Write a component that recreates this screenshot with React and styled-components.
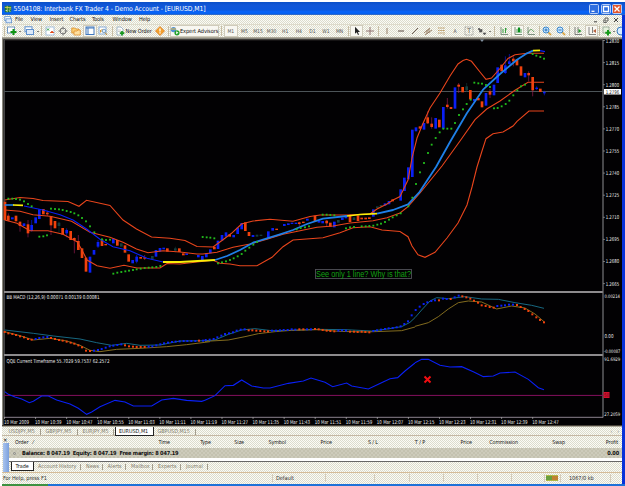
import React from "react";
import styled, { createGlobalStyle, css } from "styled-components";

const Global = createGlobalStyle`
  * { box-sizing: border-box; }
  html, body { margin: 0; background: #fff; overflow: hidden; }
  body, text { font-family: "DejaVu Sans Condensed", "DejaVu Sans", sans-serif; font-stretch: condensed; }
`;

const weave = css`
  background: repeating-conic-gradient(#fbfbf6 0 25%, #dcdccc 0 50%) 0 0 / 2px 2px;
`;

const Screen = styled.div`
  width: 625px; height: 486px; padding: 2px 0 0 2px; overflow: hidden;
  display: flex; flex-direction: column; background: #fff;
`;
const Window = styled.div`
  height: 482px; display: flex; flex-direction: column;
  border-right: 3px solid #0831d9; width: 623px; ${weave}
`;
const TitleBar = styled.div`
  height: 13px; width: 623px; flex: none; display: flex; align-items: center; padding: 0 3px 0 2px;
  background: linear-gradient(#0a50c8, #1257d8 25%, #0d58dc 60%, #0864fa 75%, #0560ee 92%, #5672a8);
`;
const Title = styled.div`
  flex: 1; margin-left: 1.5px; color: #fff; font-size: 6.8px; line-height: 12px; white-space: nowrap;
  letter-spacing: -0.06px;
`;
const WinButton = styled.div`
  width: 10px; height: 10px; margin-left: 1.4px; border: 1px solid #b9d0f8; border-radius: 1.5px;
  background: ${(p) => (p.$close ? "#e2552c" : "#2f6fe0")}; display: flex;
  svg { width: 8px; height: 8px; }
`;
const MenuBar = styled.div`
  height: 10px; flex: none; display: flex; align-items: center; padding-left: 2px;
  border-bottom: 1px solid #dedbcb;
`;
const MenuIcon = styled.svg`width: 8px; height: 8px; flex: none; margin-right: 3px;`;
const MenuItem = styled.div`
  width: ${(p) => p.$w}px; font-size: 5.6px; line-height: 9px; color: #222; letter-spacing: -0.08px; white-space: nowrap;
`;
const Spacer = styled.div`flex: 1;`;
const ChildButtons = styled.div`
  display: flex; gap: 4px; padding-right: 3px;
  svg { width: 6px; height: 6px; }
`;
const Toolbar = styled.div`
  height: 13px; flex: none; display: flex; align-items: center; padding-left: 1px; overflow: hidden;
  border-bottom: 1px solid #aca899;
`;
const Slot = styled.div`
  width: ${(p) => p.$w || 13.5}px; height: 12px; flex: none; display: flex; align-items: center; justify-content: center;
  font-size: 5px; color: #555; white-space: nowrap;
  ${(p) => p.$on && "background: #f8f7f1; border: 1px solid #cfcbbb;"}
  svg { width: 10px; height: 10px; flex: none; }
`;
const Caption = styled.span`
  width: ${(p) => p.$w}px; flex: none; font-size: 5.6px; line-height: 10px; color: #111; white-space: nowrap; letter-spacing: -0.08px;
`;
const Grip = styled.div`
  width: ${(p) => p.$w || 3}px; height: 10px; flex: none; display: flex; justify-content: center;
  &::before { content: ""; width: 1px; background: #c7bda4; }
`;
const Caret = styled.div`
  width: ${(p) => p.$w}px; flex: none; display: flex; justify-content: center;
  &::before { content: ""; border: 1.5px solid transparent; border-top-color: #111; border-bottom: 0; }
`;
const ChartFrame = styled.div`
  height: 388px; width: 620px; flex: none; background: #020103;
  svg { display: block; }
`;
const ChartTabs = styled.div`
  height: 10px; flex: none; display: flex; padding-left: 3px; border-top: 1px solid #aca899; border-bottom: 1px solid #c5b8a4;
`;
const Tab = styled.div`
  width: ${(p) => p.$w}px; flex: none; padding-left: ${(p) => p.$pad || 3.5}px; font-size: 5.4px; line-height: 9px;
  white-space: nowrap; color: #857f70;
  background: linear-gradient(#a29c8c, #a29c8c) right 1px top 2px / 1px 6px no-repeat;
  ${(p) => p.$active && "background: #fff; color: #111; border: solid #222; border-width: 0 1px 1px; height: 9px; line-height: 8px;"}
`;
const Arrows = styled.div`
  display: flex; gap: 5px; padding-right: 3px; font-size: 5px; line-height: 8px; color: #777;
`;
const Terminal = styled.div`height: 37px; flex: none; display: flex; border-bottom: 1px solid #d5bc98;`;
const Side = styled.div`
  width: 7px; padding-left: 1px; display: flex; flex-direction: column; font-size: 6px; line-height: 7px;
  &::after { content: ""; flex: 1; background: linear-gradient(90deg, #a9c4ee, #7b9fdc); }
`;
const Panel = styled.div`flex: 1; display: flex; flex-direction: column;`;
const HeadRow = styled.div`height: 12px; flex: none; display: flex; align-items: center; padding-left: 6px;`;
const Head = styled.div`
  width: ${(p) => p.$w}px; flex: none; font-size: 5.4px; line-height: 10px; color: #222; white-space: nowrap;
  text-align: ${(p) => (p.$left ? "left" : "right")}; letter-spacing: -0.08px;
`;
const Balance = styled.div`
  height: 10px; flex: none; display: flex; justify-content: space-between; align-items: center; padding: 0 3px 0 4px;
  background: repeating-conic-gradient(#cdcbbb 0 25%, #c4c2b0 0 50%) 0 0 / 4px 4px;
  font-size: 5.6px; font-weight: bold; color: #111; white-space: nowrap; letter-spacing: -0.18px;
`;
const Dot = styled.span`
  display: inline-block; width: 3px; height: 3px; margin-right: 6px; border: 1px solid #888; border-radius: 50%; vertical-align: 0;
`;
const Blank = styled.div`height: 4px; flex: none; background: #fff; border-bottom: 1px solid #666;`;
const TermTabs = styled.div`height: 11px; flex: none; display: flex; padding-left: 2px;`;
const Status = styled.div`
  height: 9px; flex: none; display: flex; align-items: center; padding-left: 1px; font-size: 5.6px; color: #333; white-space: nowrap;
`;
const Cell = styled.div`
  width: ${(p) => p.$w}px; height: 8px; line-height: 9px; flex: none; border-right: 1px solid #d4cbb9;
  padding-left: ${(p) => p.$pad || 0}px; letter-spacing: -0.08px;
  svg { width: 13px; height: 7px; display: block; }
`;
const Taskbar = styled.div`
  height: 2px; flex: none; width: 623px; background: linear-gradient(90deg, #3d9140 46px, #1d72d8 46px);
`;

const WHITE = { fill: "none", stroke: "#fff", strokeWidth: 1.3 };

const ICONS = {
  app: <><rect x="1" y="1" width="8" height="8" fill="#187838" /><path d="M1 3h8M4 1v8M6 5h3" stroke="#e8d860" /><path d="M2 7h2M6 7l2 1" stroke="#fff" /></>,
  newChart: <><rect x=".5" y="1" width="7" height="6" fill="#fff" stroke="#7298c4" /><path d="M6.5 3v6M3.5 6h6" stroke="#119412" strokeWidth="2" /></>,
  windows: <><rect x="1" y=".8" width="7" height="5" fill="#fff" stroke="#5f90cd" /><rect x="2.5" y="3.5" width="7" height="5" fill="#dceafa" stroke="#5f90cd" /></>,
  market: <><rect x="1" y="1" width="8" height="8" fill="#fff" stroke="#87add8" strokeWidth=".7" /><path d="M2 2.5l2 2m0-2l-2 2" stroke="#21993a" /><path d="M5 7l2-2 2 2" fill="#e24b1b" stroke="#e24b1b" strokeWidth=".7" /></>,
  target: <><circle cx="5" cy="5" r="3" fill="none" stroke="#777" /><path d="M5 .5v3M5 6.5v3M.5 5h3M6.5 5h3" stroke="#777" /></>,
  folder: <><path d="M.8 2h3l1 1h3v4h-7z" fill="#fbcf75" stroke="#d98c25" strokeWidth=".8" /><path d="M3 5h3l1-1h2.3v5H3z" fill="#ffe0a0" stroke="#e09030" strokeWidth=".8" /></>,
  nav: <><rect x="1" y="1" width="8" height="7.5" fill="#fff" stroke="#3f77bd" /><path d="M1 2h8M3 2v6" stroke="#3f77bd" /></>,
  tester: <><rect x="1" y="1" width="7" height="7" fill="#fff" stroke="#6f9bd0" strokeWidth=".8" /><path d="M2.5 6.5V4M4 6V3" stroke="#d59b35" /><circle cx="6" cy="5" r="1.8" fill="#d8edff" stroke="#4e80b5" strokeWidth=".7" /><path d="M7 6.5L9 9" stroke="#c48b25" /></>,
  order: <><path d="M2 1h4l2 2v6H2z" fill="#fff" stroke="#8aa6ba" strokeWidth=".8" /><path d="M3 4h3M3 5.5h3" stroke="#999" strokeWidth=".5" /><path d="M7 5v4.5M4.8 7.2h4.5" stroke="#17961b" strokeWidth="1.7" /></>,
  diamond: <><path d="M5 .5L9.5 5 5 9.5.5 5z" fill="#f4a02c" stroke="#d7791b" strokeWidth=".7" /><path d="M5 2.4v3M5 6.3v1.2" stroke="#fff" strokeWidth="1.3" /></>,
  expert: <><circle cx="3.5" cy="3.6" r="2.7" fill="#4f91d4" /><path d="M1 3h5" stroke="#eebd45" /><circle cx="7" cy="6.8" r="2.6" fill="#22a12b" /><path d="M6.2 5.3l2.2 1.5-2.2 1.5z" fill="#fff" /></>,
  cursor: <path d="M3 .8v7l1.7-1.5L6 9l1-.5-1.2-2.6H8z" fill="#222" />,
  cross: <path d="M5 1v8M1 5h8" stroke="#866" strokeWidth=".9" />,
  vline: <path d="M5 2v6" stroke="#967f69" />,
  hline: <path d="M2 5h6" stroke="#5b4a42" />,
  slash: <path d="M2 8l6-6" stroke="#5b4a42" strokeWidth=".9" />,
  channel: <path d="M1 7l6-5M2 9l7-5M4 4v4M6 3v4" stroke="#87684b" strokeWidth=".8" />,
  fib: <path d="M1 2h7M1 4.5h7M1 7h5M7 6v3" stroke="#b49055" strokeWidth=".9" strokeDasharray="1.2 .4" />,
  label: <rect x="1" y="1" width="8" height="8" fill="none" stroke="#777" strokeWidth=".7" strokeDasharray="1 .7" />,
  arrows: <path d="M2 2l2 2 1-1v3H2l1-1-2-2zM6 7h3L7.5 9z" fill="#555" stroke="#555" strokeWidth=".6" />,
  bars: <><path d="M2 1v7.5h7" fill="none" stroke="#657b68" strokeWidth=".8" /><path d="M4 3v4M6.5 2v5M6.5 3H8" stroke="#20982c" strokeWidth=".9" /></>,
  candles: <><path d="M2 1v7.5h7" fill="none" stroke="#58745c" strokeWidth=".8" /><path d="M4 3v4M8 3v4" stroke="#258e33" strokeWidth=".8" /><path d="M6 1.5v5" stroke="#078d1b" strokeWidth="2.2" /></>,
  line: <><path d="M2 1v7.5h7" fill="none" stroke="#657b68" strokeWidth=".8" /><path d="M2 7c2-5 4-4 6-1" fill="none" stroke="#438c40" strokeWidth=".8" /></>,
  zoomIn: <><path d="M6 6l3 3" stroke="#d59c30" strokeWidth="1.6" /><circle cx="4" cy="4" r="3" fill="#c6e5ff" stroke="#3d88cc" /><path d="M4 2.4v3.2M2.4 4h3.2" stroke="#1769b6" strokeWidth=".9" /></>,
  zoomOut: <><path d="M6 6l3 3" stroke="#d59c30" strokeWidth="1.6" /><circle cx="4" cy="4" r="3" fill="#c6e5ff" stroke="#3d88cc" /><path d="M2.4 4h3.2" stroke="#1769b6" strokeWidth=".9" /></>,
  scroll: <><path d="M2 1v7.5h7M5 1v6" fill="none" stroke="#666" strokeWidth=".8" /><path d="M5.5 3l3 2-3 2z" fill="#20992a" /></>,
  shift: <><path d="M2 1v7.5h7M5.5 1v6" fill="none" stroke="#666" strokeWidth=".8" /><path d="M9 3L6 5l3 2z" fill="#b8613f" /></>,
  indicator: <><rect x="1" y="1" width="6" height="6" fill="#e7f1de" stroke="#839887" strokeWidth=".7" /><path d="M6 4v5.5M3.3 6.8h5.5" stroke="#159b19" strokeWidth="2" /></>,
  clock: <circle cx="5" cy="5" r="4" fill="#d9edff" stroke="#3c7fbd" />,
};
const Icon = ({ name }) => <svg viewBox="0 0 10 10" width="10" height="10">{ICONS[name]}</svg>;

/* Series are stored in thirds of a pixel, relative to the origin of their section. */
const at = (x, y) => `translate(${x} ${y}) scale(.333333)`;
const RED = "#f0410c", BLUE = "#0a20f5", TEAL = "#153e3c";

const BANDS = [
  "M4.7 200L20 197.5 33 198.5 43 200.5 68 201.5 79 206.3 86.5 200.3 100 203.3 110 205.5 123 220 136.5 229 151.5 237 170 238.3 185 240.5 197 246.5 213 247 222 240.5 231.5 233.3 241.5 224 253 221 270 219.3 293 221.3 310 216.5 320 215 347 215 370 214 377 209 387 204 393 200 400 196.5 408 180 412 158 417 138 422.5 124.5 430 108 440 93 450 76 458 64 463 60.5 466.5 59.3 471.5 61.3 480 72 486 79.3 491.5 78 500 68.5 508 58.5 515 54.7 527 53.3 544 53.3",
  "M4.7 210L20 211.3 33 214.7 50 216.3 71.5 221.3 90 232.3 110 237.3 123 242.3 136.5 249 148 252.7 163 250.7 180 252 197 254 203 254 217 252.3 233 247.3 250 244 267 239.3 283 234.3 300 230.7 317 227.3 333 226 350 223 373 220.7 387 217.7 400 213 408 206.7 420 193 442 166 460 141 475 119.7 486.7 109 500 101 515 90.3 528 82.3 544 82.3",
  "M4.7 220L17 223.3 30 230.7 48 230.7 63 234.3 77 241.7 82 250 87 260 97 265.7 110 268.3 124 265.3 137 268 160 268 167 263.5 180 264 197 262 213 260.3 220 263.3 230 264 240 265.7 257 265.7 272 257.3 283 246.7 293 240 323 237.7 340 232.7 353 227.7 370 226.7 382 230 400 231.5 408 236.7 412 246 418 254.7 425 257.3 435 252.3 447 238 458 223 467 205 472 187 477 167 482 151 486 138.7 493 133.7 503 132 513 126 517 121.3 529 111 544 111",
];
const AVERAGE = [
  ["#1f80e8", 1.6, "M4.7 205L14 205"],
  ["#f9ee08", 1.6, "M13 205L23 205.4"],
  [BLUE, 1.1, "M24 206L43 210 60 214.7 73 220 87 229.3 100 239.3 113 246.7 130 250.7 147 258.3 163 262"],
  ["#f9ee08", 1.8, "M163 262L180 262 215 260"],
  ["#1f80e8", 1.8, "M215 260L227 256 240 250 253 242.7 267 238.3 280 234.3 293 230 307 224 323 218.7 347 216M377 213.7L393 210 408 204.3 419 192.7 436 167 450 142 467 113 483 89.7 500 74 517 59.7 527 53.3 533 50.7"],
  ["#f9ee08", 1.7, "M347 216L360 214.5 377 213.7M533 50.6L540 50.3"],
  [BLUE, 1.3, "M540 50.6L545 51.7"],
];
const SAR = [
  [0, 180, "25,56 37,56 48,57 60,59 72,64 84,72 95,79 118,170 130,169 141,166 153,86 165,87 177,88 188,90 200,93 212,96 223,100 235,106 246,114 258,124 270,139 283,157 306,178 318,180 330,179 340,281 352,278 364,276 376,274 387,272 399,270 410,268 422,266 434,264 446,263 457,262 469,261 481,258"],
  [200, 180, "8,171 20,172 31,173 43,175 54,250 66,247 78,244 90,240 101,235 113,229 125,222 136,212 148,203 160,194 171,186 290,148 302,144 315,142 327,139 368,104 380,104 391,105 403,106 438,145 450,142 462,141 485,139 497,139 508,138 520,137 532,134 543,131 555,126 567,119 578,112 590,106 602,100 625,79"],
  [400, 160, "37,113 48,72 60,37"],
  [400, 38, "72,375 84,345 95,320 107,300 119,283 130,272 142,272 154,272 165,255 177,231 189,214 200,198 212,185 223,134 235,136 246,137 258,141 270,147 282,211 293,210 305,205 317,198 328,188 340,172 352,157 363,145 375,140 398,48 409,53 421,57 432,62"],
];
/* x, body top, body bottom, colour, optional wick top and bottom */
const CANDLES = [
  [0, 180, "15,65,120,r 25,107,122,r,100,124 37,112,118,b 48,107,124,r 60,125,138,r,125,155 72,130,138,b 84,133,160,r,120,172 95,135,153,b,120,155 107,112,130,b 118,88,117,b 130,87,103,r 142,98,103,r,92,108 153,108,136,r,108,165 165,123,145,r 177,128,138,t,125,158 188,144,164,r 200,150,160,b,145,172 212,153,180,r 223,174,180,r,172,220 235,183,210,r,165,210 246,205,234,r 258,233,275,r 270,230,278,b 282,210,224,b 294,186,200,b,180,204 306,178,198,r 317,192,196,r 340,176,190,b 352,180,197,r 364,190,200,t 375,196,218,r 386,223,245,r 398,240,250,b 410,230,245,b,225,250 422,231,236,r 434,232,234,r,225,240 457,228,238,t 468,210,230,b 480,204,215,b 491,203,208,b 502,205,215,r 526,205,212,t,200,217 538,205,216,r 550,220,226,r 560,220,225,b 595,225,232,b"],
  [200, 180, "7,228,240,b 19,220,232,b 31,208,220,b 43,200,208,r 54,182,207,b 66,165,182,b 78,157,170,b 89,163,170,r 101,165,172,b 113,143,162,b 125,129,148,b 136,127,153,r 147,156,168,r 159,165,171,b 171,164,170,t 183,164,168,t 205,154,173,b 218,144,152,b 230,146,150,r 253,132,138,b 265,130,135,b 276,128,132,b 288,128,132,b 298,127,132,r,125,138 310,125,129,r 322,116,122,b 345,107,125,r 357,122,128,b 368,123,130,b 380,122,130,r,120,140 391,128,140,r 403,125,142,b 415,120,128,t 427,113,120,b 438,105,115,b 450,104,126,r 462,112,120,t 474,106,123,r 485,113,118,r 497,113,118,r 508,112,117,r 520,88,110,b 532,79,84,t 543,75,80,t 555,70,77,b 567,63,73,b 578,58,64,r 602,28,62,b 613,0,33,b"],
  [400, 160, "13,53,93,b 25,22,58,b"],
  [400, 38, "37,275,417,b 48,268,280,b 60,265,272,r 72,255,275,b 83,238,256,r,220,258 95,257,267,r,238,272 107,240,272,b 118,245,268,r 130,207,272,b 142,200,207,r,180,212 153,207,213,r 165,148,212,b 176,140,146,r,135,165 188,147,163,r 200,145,157,t,135,162 211,156,184,r 223,183,190,b 235,180,187,r 246,190,208,r 258,165,203,b 270,160,170,r,153,180 282,140,172,b 293,88,135,b 305,80,100,r 316,82,105,b,55,108 328,70,78,b,48,80 340,62,70,r,55,85 351,64,82,r 363,85,113,r 375,105,118,b 386,105,112,r,100,130 398,117,157,r,117,175 410,149,153,b,145,156 421,152,162,r 433,162,166,b,158,172"],
];
const MACD = [
  [0, "M14 120L100 130 160 138 240 147 290 158 335 166 380 160 420 166 480 165 540 153 630 152", "M14 125L60 137 100 150 150 145 200 153 240 166 270 181 300 185 350 178 420 175 500 170 560 164 630 155",
    "14,126r 25,130r 37,132r 48,135r 60,139r 72,142r 84,147r 95,149r 107,147b 118,144b 130,142b 142,141b 153,144r 165,147r 177,150r 188,152r 200,155r 212,158r 223,161r 235,166r 246,172r 258,182r 270,183r 282,182b 294,180b 305,177b 317,173b 329,169b 340,167b 352,165b 364,163b 375,166r 387,169r 399,170r 410,171r 422,171r 434,171r 446,170b 457,169b 469,166b 481,163b 492,160b 504,158b 516,156b 527,155b 539,154b 551,153b 562,153b 574,153b 586,153b 597,152r 609,152b"],
  [205, "M0 153L30 150 70 133 110 120 150 116 200 122 260 121 340 118 420 119 500 123 540 118 590 110 615 97 630 83", "M0 154L70 150 120 140 160 131 210 125 260 121 340 119 400 124 480 126 590 122 630 111",
    "2,150b 14,149b 26,147b 37,142b 49,137b 60,132b 72,130b 84,127b 95,122b 107,119b 119,118b 131,121r 142,121r 154,122r 166,123r 178,124r 189,124r 201,122b 213,122b 225,121b 236,120b 248,120b 260,118b 271,119b 283,118r 295,118r 306,118b 318,118b 330,117r 341,118r 353,120r 365,122r 376,123r 388,124r 400,122b 411,121b 423,122b 435,125r 447,125r 458,126r 470,125r 481,126r 493,127r 505,123b 516,121b 528,119b 540,117b 551,115b 563,114b 575,112b 587,109b 598,102b 609,94b 620,76b"],
  [415, "M0 83L20 60 45 33 65 23 100 26 150 20 200 27 250 28 300 38 350 46 387 55", "M0 109L40 98 70 80 100 57 130 38 160 33 200 36 245 57 290 48 330 54 360 72 387 95",
    "2,60b 14,50b 26,42b 37,37b 49,33b 60,31b 72,31r 84,26b 95,27b 107,27r 119,22b 131,17b 142,19r 154,22r 166,26r 177,32r 189,38r 200,46r 212,48r 224,51r 236,53r 247,48b 259,47b 270,46b 282,44b 294,44b 306,45r 317,51r 329,57r 340,63r 352,73r 364,82r 375,90r 387,97r"],
];
const QQE = [
  [0, "M14 305L25 313 45 321 65 327 88 338 100 334 125 318 145 318 170 330 210 342 235 355 260 373 275 366 300 350 345 331 375 336 400 348 455 348 485 330 520 325 560 331 605 334 615 331"],
  [205, "M0 331L30 317 60 287 85 286 110 270 140 288 175 294 195 294 250 280 295 273 318 264 360 277 383 290 425 279 440 288 490 297 520 283 555 266 578 263 600 243 630 219"],
  [415, "M0 218L20 208 40 208 75 226 105 231 140 230 175 245 205 260 235 258 255 249 300 246 340 268 370 293 387 299"],
];
const PRICES = ["1.2830", "1.2815", "1.2800", "1.2785", "1.2770", "1.2755", "1.2740", "1.2725", "1.2710", "1.2695", "1.2680", "1.2665"];
const TIMES = ["2009", "10:39", "10:47", "10:55", "11:03", "11:11", "11:19", "11:27", "11:35", "11:43", "11:51", "11:59", "12:07", "12:15", "12:23", "12:31", "12:39", "12:47"];

const ChartText = styled.text`font-size: ${(p) => (p.$small ? 4.8 : 5.3)}px; fill: #ececec;`;
const Note = styled.text`font-family: "Liberation Sans", Arial, sans-serif; font-size: 8.4px; fill: #12a012;`;

function Candles() {
  const colours = { r: RED, b: BLUE, t: TEAL };
  return CANDLES.map(([ox, oy, data]) => (
    <g key={`${ox}-${oy}`} transform={at(ox, oy)}>
      {data.split(" ").map((item) => {
        const [x, top, bottom, c, hi, lo] = item.split(",");
        return (
          <g key={x} fill={colours[c]}>
            {hi && <rect x={+x - 1.5} y={+hi} width="3" height={lo - hi} opacity=".6" fill={c === "r" ? "#a8205a" : undefined} />}
            <rect x={+x - 4} y={+top} width="8" height={Math.max(4, bottom - top)} />
          </g>
        );
      })}
    </g>
  ));
}

function Chart() {
  return (
    <svg width="620" height="388" viewBox="2 38 620 388">
      <rect x="2" y="38" width="620" height="388" fill="#020103" />
      <path d="M2 38.5H622M2.7 38V426" stroke="#8a887e" strokeWidth="1.4" />
      <path d="M4 39.8H603" stroke="#55534f" strokeWidth=".8" />
      <path d="M4.4 40V417" stroke="#6c6d6b" strokeWidth=".7" />
      <path d="M4 292H603M4 355H603" stroke="#8d8b8d" strokeWidth="2" />
      <path d="M603 40V417.5" stroke="#77777b" strokeWidth="1.2" />
      <path d="M4 417.3H603" stroke="#8d838f" />
      <path d="M4 91.5H604" stroke="#4c5458" />
      <path d="M480 39.5h4l-2 2.6z" fill="#8290a0" />
      <path d="M4 395.4H603" stroke="#85105e" />

      <Candles />
      {BANDS.map((d) => <path key={d} d={d} fill="none" stroke="#e8451c" strokeWidth="1.1" />)}
      {AVERAGE.map(([c, w, d]) => <path key={d} d={d} fill="none" stroke={c} strokeWidth={w} strokeLinejoin="round" />)}
      {SAR.map(([x, y, data]) => (
        <g key={`${x}-${y}`} transform={at(x, y)} fill="#22bb1c">
          {data.split(" ").map((p) => { const [a, b] = p.split(","); return <rect key={p} x={a - 2.8} y={b - 2.8} width="5.6" height="5.6" />; })}
        </g>
      ))}

      {MACD.map(([x, upper, lower, dots]) => (
        <g key={x} transform={at(x, 290)} fill="none" strokeWidth="3">
          <path d={upper} stroke="#176781" />
          <path d={lower} stroke="#836b1e" />
          {dots.split(" ").map((p) => { const [a, b] = p.slice(0, -1).split(","); return <rect key={p} x={a - 3} y={b - 3} width="6" height="6" fill={p.endsWith("r") ? RED : BLUE} />; })}
        </g>
      ))}
      {QQE.map(([x, d]) => <path key={x} transform={at(x, 290)} d={d} fill="none" stroke={BLUE} strokeWidth="3.3" />)}
      <path d="M424.5 376.5l6 6m0-6l-6 6" stroke="#f00d12" strokeWidth="2" />

      <rect x="315.5" y="269.5" width="96" height="9" fill="none" stroke="#505058" strokeWidth=".9" />
      <Note x="316" y="277" textLength="95" lengthAdjust="spacingAndGlyphs">See only 1 line? Why is that?</Note>
      <ChartText x="6.5" y="299.3" textLength="93" lengthAdjust="spacingAndGlyphs">BB MACD (12,26,9) 0.00071 0.00139 0.00081</ChartText>
      <ChartText x="6.5" y="362.5" textLength="103" lengthAdjust="spacingAndGlyphs">QQE Current Timeframe 55.7029 59.7537 62.2572</ChartText>

      {PRICES.map((p, i) => (
        <g key={p}>
          <path d={`M603 ${40.5 + i * 22.1}h2`} stroke="#999" strokeWidth=".7" />
          <ChartText x="605.7" y={(i ? 42.4 : 43) + i * 22.1} textLength="13.5" lengthAdjust="spacingAndGlyphs">{p}</ChartText>
        </g>
      ))}
      <rect x="604" y="89" width="17" height="5.5" fill="#fff" />
      <text x="605.7" y="93.7" fontSize="5.3" fill="#111" textLength="13.5" lengthAdjust="spacingAndGlyphs">1.2796</text>
      <ChartText $small x="604.5" y="297.8" textLength="15.5" lengthAdjust="spacingAndGlyphs">0.00214</ChartText>
      <ChartText x="604.5" y="338.4" textLength="9" lengthAdjust="spacingAndGlyphs">0.00</ChartText>
      <ChartText $small x="604" y="353.3" textLength="16.3" lengthAdjust="spacingAndGlyphs">-0.00087</ChartText>
      <ChartText $small x="604.3" y="361" textLength="16" lengthAdjust="spacingAndGlyphs">91.6929</ChartText>
      <ChartText $small x="604.3" y="415.8" textLength="16" lengthAdjust="spacingAndGlyphs">27.2059</ChartText>
      <rect x="603.5" y="392" width="6" height="6" fill="#d4102e" />
      <text x="604" y="397" fontSize="5" fill="#650818" textLength="5" lengthAdjust="spacingAndGlyphs">50</text>
      {TIMES.map((t, i) => {
        const x = 4 + i * 31.07;
        return (
          <g key={t}>
            <path d={`M${x + 0.5} 417v2`} stroke="#aaa" strokeWidth=".7" />
            <ChartText x={x} y="423.8" textLength={i ? 26.5 : 25} lengthAdjust="spacingAndGlyphs">{`10 Mar ${t}`}</ChartText>
          </g>
        );
      })}
      <path d="M2 425.5H622" stroke="#464038" />
    </svg>
  );
}

const MENU = [["File", 15.5], ["View", 19], ["Insert", 20], ["Charts", 22.5], ["Tools", 20.5], ["Window", 26.5], ["Help", 12]];
const PERIODS = ["M1", "M5", "M15", "M30", "H1", "H4", "D1", "W1", "MN"];
const COLUMNS = [["Time", 125], ["Type", 41], ["Size", 33], ["Symbol", 42], ["Price", 46], ["S / L", 46], ["T / P", 47], ["Price", 47], ["Commission", 46], ["Swap", 47], ["Profit", 53]];
const TERM_TABS = [["Account History", 48], ["News", 21.5], ["Alerts", 23.5], ["Mailbox", 27], ["Experts", 28], ["Journal", 26.5]];

export default function App() {
  return (
    <>
      <Global />
      <Screen>
        <Window>
          <TitleBar>
            <svg width="8" height="8" viewBox="0 0 10 10">{ICONS.app}</svg>
            <Title>5504108: Interbank FX Trader 4 - Demo Account - [EURUSD,M1]</Title>
            <WinButton><svg viewBox="0 0 8 8"><path d="M1.5 6.3h3" {...WHITE} /></svg></WinButton>
            <WinButton><svg viewBox="0 0 8 8"><path d="M1.5 1.5h5v5h-5z" {...WHITE} /></svg></WinButton>
            <WinButton $close><svg viewBox="0 0 8 8"><path d="M1.5 1.5l5 5m0-5l-5 5" {...WHITE} /></svg></WinButton>
          </TitleBar>
          <MenuBar>
            <MenuIcon viewBox="0 0 10 10">{ICONS.windows}</MenuIcon>
            {MENU.map(([name, w]) => <MenuItem key={name} $w={w}>{name}</MenuItem>)}
            <Spacer />
            <ChildButtons>
              <svg viewBox="0 0 6 6"><path d="M1 4.8h3" stroke="#444" /></svg>
              <svg viewBox="0 0 6 6"><path d="M2 1h3v3H2zM.8 2.5v3h3" fill="none" stroke="#444" strokeWidth=".8" /></svg>
              <svg viewBox="0 0 6 6"><path d="M1 1l4 4m0-4L1 5" stroke="#444" /></svg>
            </ChildButtons>
          </MenuBar>
          <Toolbar>
            <Grip />
            <Slot $w={11}><Icon name="newChart" /></Slot><Caret $w={6} />
            <Slot $w={12}><Icon name="windows" /></Slot><Caret $w={5} />
            <Grip />
            <Slot $w={13}><Icon name="market" /></Slot>
            <Slot><Icon name="target" /></Slot>
            <Slot><Icon name="folder" /></Slot>
            <Slot $on><Icon name="nav" /></Slot>
            <Slot $w={13}><Icon name="tester" /></Slot>
            <Grip $w={5} />
            <Slot $w={11}><Icon name="order" /></Slot><Caption $w={28}>New Order</Caption>
            <Slot $w={13}><Icon name="diamond" /></Slot>
            <Grip />
            <Slot $w={49.5} $on><Icon name="expert" /><Caption $w={38.5}>Expert Advisors</Caption></Slot>
            <Grip $w={5} />
            {PERIODS.map((p) => <Slot key={p} $w={13.6} $on={p === "M1"}>{p}</Slot>)}
            <Grip $w={3.5} />
            <Slot $on><Icon name="cursor" /></Slot>
            <Slot><Icon name="cross" /></Slot>
            <Grip />
            <Slot $w={15}><Icon name="vline" /></Slot>
            <Slot $w={13}><Icon name="hline" /></Slot>
            <Slot><Icon name="slash" /></Slot>
            <Slot><Icon name="channel" /></Slot>
            <Slot><Icon name="fib" /></Slot>
            <Slot>A</Slot>
            <Slot><svg viewBox="0 0 10 10">{ICONS.label}<text x="5" y="7.3" fontSize="6.5" textAnchor="middle" fill="#555">T</text></svg></Slot>
            <Slot $w={13}><Icon name="arrows" /></Slot><Caret $w={4} />
            <Grip $w={5} />
            <Slot><Icon name="bars" /></Slot>
            <Slot $on><Icon name="candles" /></Slot>
            <Slot $w={14}><Icon name="line" /></Slot>
            <Grip $w={2} />
            <Slot><Icon name="zoomIn" /></Slot>
            <Slot><Icon name="zoomOut" /></Slot>
            <Grip $w={4} />
            <Slot><Icon name="scroll" /></Slot>
            <Slot $on><Icon name="shift" /></Slot>
            <Grip />
            <Slot $w={11}><Icon name="indicator" /></Slot><Caret $w={3} />
            <Slot $w={11}><Icon name="clock" /></Slot>
          </Toolbar>
          <ChartFrame><Chart /></ChartFrame>
          <ChartTabs>
            <Tab $w={37}>USDJPY,M5</Tab>
            <Tab $w={37}>GBPJPY,M5</Tab>
            <Tab $w={35.5}>EURJPY,M5</Tab>
            <Tab $w={39} $active>EURUSD,M1</Tab>
            <Tab $w={43} $pad={4}>GBPUSD,M15</Tab>
            <Spacer />
            <Arrows><span>‹</span><span>›</span></Arrows>
          </ChartTabs>
          <Terminal>
            <Side>×</Side>
            <Panel>
              <HeadRow>
                <Head $w={30} $left>Order&nbsp;&nbsp; ⁄</Head>
                {COLUMNS.map(([name, w], i) => <Head key={i} $w={w}>{name}</Head>)}
              </HeadRow>
              <Balance><span><Dot />Balance: 8 047.19&nbsp; Equity: 8 047.19&nbsp; Free margin: 8 047.19</span><span>0.00</span></Balance>
              <Blank />
              <TermTabs>
                <Tab $w={23} $active>Trade</Tab>
                {TERM_TABS.map(([name, w]) => <Tab key={name} $w={w} $pad={4}>{name}</Tab>)}
              </TermTabs>
            </Panel>
          </Terminal>
          <Status>
            <Cell $w={270}>For Help, press F1</Cell>
            <Cell $w={53} $pad={3}>Default</Cell>
            <Cell $w={49} /><Cell $w={35} /><Cell $w={34} /><Cell $w={34} /><Cell $w={34} />
            <Cell $w={33} />
            <Cell $w={16} $pad={1}>
              <svg viewBox="0 0 13 7">
                <rect y="1" width="12" height="6" fill="#b0b847" />
                <path d="M1 2v4M3 2v4M5 2v4" stroke="#238635" />
                <path d="M7 2v4M9 2v4M11 2v4" stroke="#cf4a1f" />
              </svg>
            </Cell>
            <Cell $w={50} $pad={8}>1067/0 kb</Cell>
          </Status>
        </Window>
        <Taskbar />
      </Screen>
    </>
  );
}
